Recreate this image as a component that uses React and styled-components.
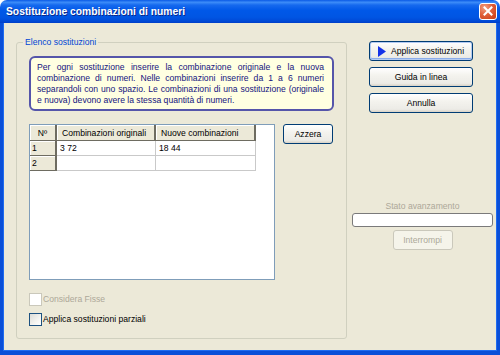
import React from "react";
import styled, { createGlobalStyle } from "styled-components";

const infoLines = [
  "Per ogni sostituzione inserire la combinazione originale e la nuova",
  "combinazione di numeri. Nelle combinazioni inserire da 1 a 6 numeri",
  "separandoli con uno spazio. Le combinazioni di una sostituzione (originale",
  "e nuova) devono avere la stessa quantità di numeri.",
];

const rows = [
  { n: "1", orig: "3 72", nuove: "18 44" },
  { n: "2", orig: "", nuove: "" },
];

const App = () => {
  return (
    <>
      <GlobalStyle />
      <Window>
        <TitleBar>
          <Title>Sostituzione combinazioni di numeri</Title>
          <CloseButton>
            <svg width="10" height="10" viewBox="0 0 10 10">
              <path d="M1.5 1.5 L8.5 8.5 M8.5 1.5 L1.5 8.5" stroke="#fff" strokeWidth="2" strokeLinecap="square" />
            </svg>
          </CloseButton>
        </TitleBar>
        <Frame>
          <GroupBox>
            <Legend>Elenco sostituzioni</Legend>
            <InfoBox>
              {infoLines.map((line, i) => (
                <InfoLine key={i} $last={i === infoLines.length - 1}>
                  {line}
                </InfoLine>
              ))}
            </InfoBox>
            <TableRow>
              <GridBox>
                <Grid>
                  <Cell $fixed $center>Nº</Cell>
                  <Cell $fixed $pad={5}>Combinazioni originali</Cell>
                  <Cell $fixed $pad={5}>Nuove combinazioni</Cell>
                  {rows.map((r) => (
                    <React.Fragment key={r.n}>
                      <Cell $fixed $pad={2}>{r.n}</Cell>
                      <Cell>{r.orig}</Cell>
                      <Cell>{r.nuove}</Cell>
                    </React.Fragment>
                  ))}
                </Grid>
              </GridBox>
              <Button $w={50}>Azzera</Button>
            </TableRow>
            <Checks>
              <CheckItem $disabled>
                <CheckBox $disabled />
                Considera Fisse
              </CheckItem>
              <CheckItem>
                <CheckBox />
                Applica sostituzioni parziali
              </CheckItem>
            </Checks>
          </GroupBox>
          <SideColumn>
            <ButtonStack>
              <Button $w={104} $default>
                <svg width="8" height="11" viewBox="0 0 8 11">
                  <polygon points="0,0 8,5.5 0,11" fill="#1532e8" />
                </svg>
                Applica sostituzioni
              </Button>
              <Button $w={104}>Guida in linea</Button>
              <Button $w={104}>Annulla</Button>
            </ButtonStack>
            <Status>
              <StatusLabel>Stato avanzamento</StatusLabel>
              <Progress />
              <Button $w={60} disabled>
                Interrompi
              </Button>
            </Status>
          </SideColumn>
        </Frame>
      </Window>
    </>
  );
};

const GlobalStyle = createGlobalStyle`
  html, body {
    margin: 0;
    padding: 0;
    background: #ffffff;
  }
  body {
    font-family: "Liberation Sans", Arial, sans-serif;
  }
  * {
    box-sizing: border-box;
  }
`;

const Window = styled.div`
  width: 500px;
  height: 355px;
  display: flex;
  flex-direction: column;
  font-size: 8.6px;
`;

const TitleBar = styled.div`
  height: 23px;
  display: flex;
  align-items: center;
  justify-content: space-between;
  padding: 0 3px 1px 6px;
  border-radius: 7px 7px 0 0;
  background: linear-gradient(
    to bottom,
    #0a5ae6 0%,
    #3c8cf8 10%,
    #1669ee 22%,
    #0058e8 45%,
    #0055e3 75%,
    #0049d6 92%,
    #003ec8 100%
  );
`;

const Title = styled.span`
  color: #ffffff;
  font-weight: 700;
  font-size: 10.3px;
  text-shadow: 1px 1px 0 #0b2a8c;
`;

const CloseButton = styled.div`
  width: 18px;
  height: 17px;
  display: flex;
  align-items: center;
  justify-content: center;
  border: 1px solid #ffffff;
  border-radius: 3px;
  background: radial-gradient(circle at 30% 25%, #f0a082 0%, #e0603a 45%, #c73a12 100%);
`;

const Frame = styled.div`
  flex: 1;
  display: flex;
  gap: 5px;
  padding: 14px 0 0 13px;
  background: #ece9d8;
  border-style: solid;
  border-color: #0a4fd8;
  border-width: 0 3px 4px 3px;
  box-shadow: inset 1px 0 0 #1f6cf0, inset -1px 0 0 #1f6cf0, inset 0 -1px 0 #1f6cf0;
`;

const GroupBox = styled.fieldset`
  margin: 0;
  width: 331px;
  height: 302px;
  min-width: 0;
  padding: 9px 0 0 12px;
  border: 1px solid #d0d0bf;
  border-radius: 3px;
  display: flex;
  flex-direction: column;
`;

const Legend = styled.legend`
  color: #0046d5;
  line-height: 10px;
  padding: 0 2px;
  margin-left: -6px;
`;

const InfoBox = styled.div`
  width: 305px;
  border: 2px solid #5555aa;
  border-radius: 6px;
  background: #ffffe1;
  padding: 4px 8px 3px 6px;
  color: #14147e;
  line-height: 11px;
`;

const InfoLine = styled.div`
  text-align: justify;
  text-align-last: ${({ $last }) => ($last ? "left" : "justify")};
`;

const TableRow = styled.div`
  display: flex;
  align-items: flex-start;
  gap: 8px;
  margin-top: 13px;
`;

const GridBox = styled.div`
  width: 246px;
  height: 156px;
  border: 1px solid #7f9db9;
  background: #ffffff;
`;

const Grid = styled.div`
  display: grid;
  grid-template-columns: 27px 99px 100px;
  grid-template-rows: 16px 15px 15px;
`;

const Cell = styled.div`
  display: flex;
  align-items: center;
  justify-content: ${({ $center }) => ($center ? "center" : "flex-start")};
  padding-left: ${({ $center, $pad }) => ($center ? 0 : $pad ?? 3)}px;
  white-space: nowrap;
  overflow: hidden;
  color: #000000;
  background: ${({ $fixed }) => ($fixed ? "#ece9d8" : "#ffffff")};
  border-right: ${({ $fixed }) => ($fixed ? "2px solid #6e6c61" : "1px solid #c9c9c9")};
  border-bottom: ${({ $fixed }) => ($fixed ? "1px solid #6e6c61" : "1px solid #c9c9c9")};
  box-shadow: ${({ $fixed }) => ($fixed ? "inset 1px 1px 0 #ffffff" : "none")};
`;

const Button = styled.button`
  width: ${({ $w }) => $w}px;
  height: 20px;
  margin: 0;
  padding: 0;
  display: flex;
  align-items: center;
  justify-content: center;
  gap: 5px;
  font-family: "Liberation Sans", Arial, sans-serif;
  font-size: 8.6px;
  color: #000000;
  border: 1px solid #003c74;
  border-radius: 3px;
  background: linear-gradient(to bottom, #ffffff 0%, #f4f3ee 40%, #ecebe6 85%, #d8d2c6 100%);
  box-shadow: ${({ $default }) =>
    $default ? "inset 0 0 0 1px #b4cbf2, inset 0 -1px 0 1px #8cadea" : "none"};

  &:disabled {
    color: #aca899;
    border-color: #cac8bb;
    background: #f5f4ea;
  }
`;

const Checks = styled.div`
  display: flex;
  flex-direction: column;
  gap: 7px;
  margin-top: 13px;
`;

const CheckItem = styled.label`
  display: flex;
  align-items: center;
  gap: 1px;
  line-height: 13px;
  color: ${({ $disabled }) => ($disabled ? "#aca899" : "#000000")};
`;

const CheckBox = styled.span`
  width: 13px;
  height: 13px;
  border: 1px solid ${({ $disabled }) => ($disabled ? "#cac8bb" : "#1c5180")};
  background: ${({ $disabled }) =>
    $disabled ? "#ffffff" : "linear-gradient(135deg, #dcdcd7 0%, #f4f4f0 60%, #ffffff 100%)"};
`;

const SideColumn = styled.div`
  width: 141px;
  display: flex;
  flex-direction: column;
  padding-top: 4px;
`;

const ButtonStack = styled.div`
  display: flex;
  flex-direction: column;
  gap: 6px;
  padding-left: 17px;
`;

const Status = styled.div`
  display: flex;
  flex-direction: column;
  align-items: center;
  margin-top: 88px;
`;

const StatusLabel = styled.div`
  color: #aca899;
  line-height: 10px;
`;

const Progress = styled.div`
  width: 141px;
  height: 14px;
  margin: 2px 0 3px;
  border: 1px solid #7a7a7a;
  border-radius: 3px;
  background: #ffffff;
`;

export default App;
